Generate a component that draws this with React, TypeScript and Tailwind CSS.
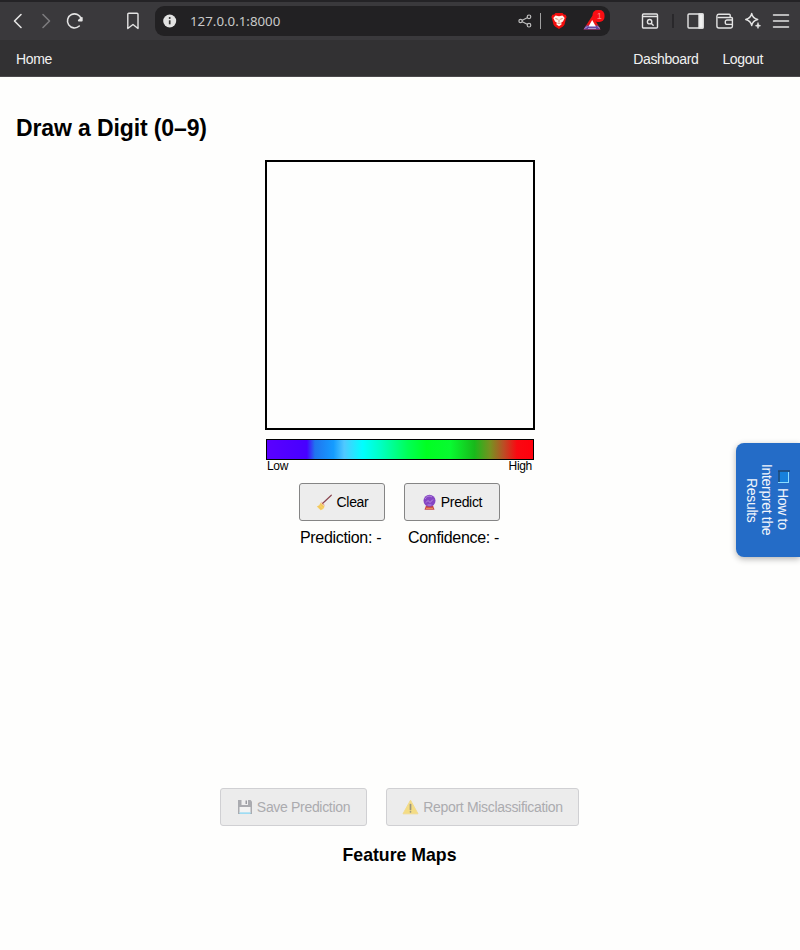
import type { ReactNode } from "react";

function Icon({ w, h, className = "", children }: { w: number; h: number; className?: string; children: ReactNode }) {
  return (
    <svg width={w} height={h} viewBox={`0 0 ${w} ${h}`} fill="none" stroke="#e4e4e4" strokeWidth="1.4" strokeLinecap="round" strokeLinejoin="round" className={`shrink-0 ${className}`}>
      {children}
    </svg>
  );
}

function BrowserBar() {
  return (
    <div className="flex h-10 items-center border-t-2 border-[#242326] bg-[#3a393c]">
      <Icon w={10} h={16} className="ml-[13px]">
        <path d="M8 1.5 1.5 8 8 14.5" strokeWidth="1.6" />
      </Icon>
      <Icon w={10} h={16} className="ml-[18px]">
        <path d="M2 1.5 8.5 8 2 14.5" stroke="#7c7b7e" strokeWidth="1.6" />
      </Icon>
      <Icon w={18} h={18} className="ml-[15px]">
        <path d="M13.3 14A7 7 0 1 1 15.200 7" strokeWidth="1.600" />
        <path d="M15.800 5.800V8.500H12.800Z" fill="#e4e4e4" strokeWidth="1.800" />
      </Icon>
      <Icon w={14} h={18} className="ml-[42px]">
        <path d="M2.8 1.3H11a1 1 0 0 1 1 1V16.500L7 12.500 1.800 16.500V2.300a1 1 0 0 1 1-1Z" />
      </Icon>
      <div className="ml-[15px] flex h-[30px] w-[455px] items-center rounded-[9px] bg-[#222123]">
        <svg width="14" height="14" viewBox="0 0 14 14" className="ml-2 shrink-0">
          <circle cx="6.700" cy="7" r="6.500" fill="#e2e2e2" />
          <path d="M6.700 6.300V10.300" stroke="#333" strokeWidth="1.700" />
          <circle cx="6.700" cy="4" r="1" fill="#333" />
        </svg>
        <span className="ml-[13px] w-[328px] font-['Noto_Sans',sans-serif] text-[13.300px] leading-5 text-[#c9c9c9]">127.0.0.1:8000</span>
        <Icon w={14} h={14}>
          <g stroke="#bdbdbd" strokeWidth="1.200">
            <circle cx="2.600" cy="7" r="1.700" />
            <circle cx="11" cy="2.800" r="1.800" />
            <circle cx="11" cy="11.200" r="1.800" />
            <path d="m4.300 6.200 4.900-2.500M4.300 7.800l4.900 2.500" />
          </g>
        </Icon>
        <div className="ml-2 h-4 w-px bg-[#a0a0a0]" />
        <svg width="16" height="18" viewBox="0 0 16 18" className="ml-[10px] shrink-0">
          <path d="M4.500 1h7l1.400 1.500 1.800.2.9 2.400-.6 1.300-1.500 6.200c-.4 1.300-2.800 3-5.500 4.400-2.700-1.400-5.100-3.100-5.500-4.400L1 6.400.4 5.100l.9-2.400 1.800-.2Z" fill="#f20d0d" />
          <path d="m4.500 3.500 3.500.7 3.500-.7 2.200 2.500-1.700 3.500-1.700 1 .2 2L8 14.300l-2.500-1.800.2-2-1.700-1L2.300 6Z" fill="#fff4ee" />
          <path d="m4.400 6.500 2.400.8M11.600 6.500l-2.400.8M8 7.500V10M6.500 11.200h3" stroke="#c57a58" strokeWidth=".9" />
        </svg>
        <svg width="23" height="22" viewBox="0 0 23 22" className="mb-[3px] ml-[16px] shrink-0">
          <path d="m9.500 6.500-9 14h17Z" fill="#ef1515" />
          <path d="m.5 20.500 2.500-4h12l2.500 4Z" fill="#6547a5" />
          <path d="m9.200 11-3.700 6.500h7.400Z" fill="#fff" />
          <path d="m1.500 19.500 3-2M14.500 17.500l2.500 2M5 19.500h8" stroke="#b9add5" strokeWidth=".8" />
          <rect x="9.500" y="1" width="12" height="12" rx="5" fill="#fa0d13" />
          <text x="14" y="9.500" fontSize="8.500" fill="#ff8d8d" fontFamily="Liberation Sans, sans-serif">1</text>
        </svg>
      </div>
      <Icon w={18} h={16} className="ml-[31px]">
        <rect x="1.500" y="1" width="15" height="14" rx="1" />
        <path d="M2 3.500h14" strokeWidth="1.600" />
        <circle cx="8.600" cy="8.700" r="2.200" />
        <path d="m10.400 10.500 1.800 1.800" />
      </Icon>
      <div className="ml-[13px] h-[14px] w-[2px] bg-[#29282b]" />
      <Icon w={18} h={16} className="ml-[13px]">
        <rect x="1" y="1" width="15" height="14" rx="1" />
        <path d="M12 1h4v14h-4Z" fill="#f1f1f1" />
      </Icon>
      <Icon w={18} h={16} className="ml-[11px]">
        <path d="M13.800 4V2.300a1 1 0 0 0-1-1H2.500a2 2 0 0 0-2 1.700V13a2 2 0 0 0 2 2h11.800a1.700 1.700 0 0 0 1.700-1.700V5.500a1 1 0 0 0-1-1H2" transform="translate(.4 0)" />
        <path d="M16.400 7H11a1.700 1.700 0 0 0-1.700 1.700v1A1.700 1.700 0 0 0 11 11.400h5.400" />
      </Icon>
      <Icon w={18} h={18} className="ml-[10px]">
        <path d="M7.700 1.500c.7 3.700 2 5 6 6-4 1-5.300 2.300-6 6-.8-3.700-2.200-5-6-6 3.800-1 5.200-2.300 6-6Z" />
        <path d="M14 11c.3 1.800.9 2.300 2.500 2.700-1.600.4-2.200 1-2.500 2.700-.3-1.700-.9-2.300-2.500-2.700 1.600-.4 2.200-.9 2.500-2.700Z" fill="#e4e4e4" strokeWidth=".8" />
      </Icon>
      <Icon w={18} h={14} className="ml-[10px]">
        <path d="M1.500 1h15M1.500 7h15M1.500 13h15" strokeWidth="1.500" />
      </Icon>
    </div>
  );
}

function Broom() {
  return (
    <svg width="17" height="17" viewBox="0 0 17 17" className="shrink-0">
      <path d="M6.500 9.500 15.300 1.200" stroke="#8b4651" strokeWidth="1.200" strokeLinecap="round" />
      <path d="m4.500 8.500 4 3.800c-.3 2-1.500 3.200-3.800 4L.8 12.500c2.200-.7 3.200-2 3.700-4Z" fill="#f6cf65" />
      <path d="m2.500 12 3 3M4.500 10l3 3" stroke="#e5b654" strokeWidth=".6" />
      <path d="m5.500 8.300 3 2.900" stroke="#df6f65" strokeWidth=".8" />
    </svg>
  );
}

function CrystalBall() {
  return (
    <svg width="15" height="17" viewBox="0 0 15 17" className="shrink-0">
      <path d="m4 11.500-1.500 4.300h10L11 11.500Z" fill="#c64149" />
      <path d="M4 14.300h7" stroke="#efa05c" strokeWidth="1" />
      <circle cx="7.500" cy="6.800" r="6" fill="#8546c4" />
      <path d="M3 5c1.500-3 5-3.500 7-2M4 8.500l2-2 2 2 3-3M5.500 11h4" stroke="#b98be0" strokeWidth="1" fill="none" />
    </svg>
  );
}

function Floppy() {
  return (
    <svg width="16" height="16" viewBox="0 0 16 16" className="shrink-0">
      <path d="M1 1h12.500L15 2.500V15H1Z" fill="#aaabb0" />
      <path d="M4.500 1h6.500v5H4.500Z" fill="#eeeeef" />
      <path d="M8.500 1.500h1.500V5H8.500Z" fill="#999aa0" />
      <path d="M2.500 8h11v6h-11Z" fill="#f3f3f3" />
      <path d="M2.500 13.300h11V15h-11Z" fill="#9edcf3" />
    </svg>
  );
}

function Warning() {
  return (
    <svg width="17" height="16" viewBox="0 0 17 16" className="shrink-0">
      <path d="M8.500 1.200 16 14.800H1Z" fill="#f4dc83" stroke="#f1db8f" strokeLinejoin="round" />
      <path d="M8.500 5.500v5" stroke="#999580" strokeWidth="1.700" strokeLinecap="round" />
      <circle cx="8.500" cy="12.800" r=".9" fill="#999580" />
    </svg>
  );
}

function Button({ width, disabled = false, icon, children }: { width: string; disabled?: boolean; icon: ReactNode; children: ReactNode }) {
  return (
    <button disabled={disabled} className={`flex h-[38px] items-center justify-center gap-[4px] whitespace-nowrap rounded-[3px] border text-[14px] tracking-[-0.320px] ${width} ${disabled ? "border-[#d0d0d3] bg-[#ececec] text-[#ababaf]" : "border-[#858585] bg-[#ededed] text-black"}`}>
      {icon}
      <span>{children}</span>
    </button>
  );
}

export default function App() {
  return (
    <div className="relative h-[950px] w-[800px] overflow-hidden bg-[#fefefd] font-['Liberation_Sans',Arial,sans-serif] text-black">
      <BrowserBar />
      <nav className="flex h-[37px] items-center border-b border-[#4b494c] bg-[#323133] pl-4 pr-[37px] pt-[2px] text-[14px] tracking-[-0.370px] text-[#f1f1f1]">
        <a>Home</a>
        <a className="ml-auto">Dashboard</a>
        <a className="ml-6">Logout</a>
      </nav>
      <main className="flex flex-col items-center">
        <h1 className="mt-9 self-start pl-4 text-[23px] font-bold leading-[30px] tracking-[-0.120px]">Draw a Digit (0–9)</h1>
        <div className="mt-[17px] h-[270px] w-[270px] border-2 border-black" />
        <div className="mt-[9px] h-[21px] w-[268px] border border-black bg-[linear-gradient(90deg,#5a00ff_0%,#4700ff_15%,#2074ef_18%,#159cff_25%,#50c8ff_29%,#00ffff_36%,#00ffc0_43%,#00ff55_53%,#00ff22_60%,#08fa30_69%,#18b91b_78%,#789020_84%,#bb4d25_89%,#fa0811_94%,#ff000d_100%)]" />
        <div className="flex h-[13px] w-[266px] justify-between pr-px text-[12px] leading-[13px] tracking-[-0.300px]">
          <span>Low</span>
          <span>High</span>
        </div>
        <div className="mt-[10px] flex gap-[19px] pr-px">
          <Button width="w-[86px]" icon={<Broom />}>Clear</Button>
          <Button width="w-[96px]" icon={<CrystalBall />}>Predict</Button>
        </div>
        <div className="mt-2 flex w-[200px] justify-between pr-px text-[16px] leading-[18px] tracking-[-0.320px]">
          <span>Prediction: -</span>
          <span>Confidence: -</span>
        </div>
        <div className="mt-[241px] flex gap-[19px] pr-px">
          <Button width="w-[147px]" disabled icon={<Floppy />}>Save Prediction</Button>
          <Button width="w-[193px]" disabled icon={<Warning />}>Report Misclassification</Button>
        </div>
        <h2 className="mt-[18px] pr-px text-[17.700px] font-bold leading-[22px]">Feature Maps</h2>
      </main>
      <aside className="absolute right-0 top-[443px] flex h-[114px] w-[64px] items-center justify-center rounded-l-[8px] bg-[#246cc7] text-center text-[14px] leading-[15.300px] tracking-[-0.320px] text-[#f1f5fc] shadow-[0_2px_6px_rgba(0,0,0,0.3)] [writing-mode:vertical-rl]">
        <span>
          <svg width="12" height="14" viewBox="0 0 12 14" className="relative right-[2px] mb-[4px] inline-block">
            <path d="M0 1h10v12H0Z" fill="#1680dc" />
            <path d="M0 1h12M1 1v12" stroke="#1f4571" strokeWidth="1.500" />
            <path d="M0 12.500h11M10.500 2v10" stroke="#8bdcff" strokeWidth="1" />
          </svg>
          How to<br />Interpret the<br />Results
        </span>
      </aside>
    </div>
  );
}
